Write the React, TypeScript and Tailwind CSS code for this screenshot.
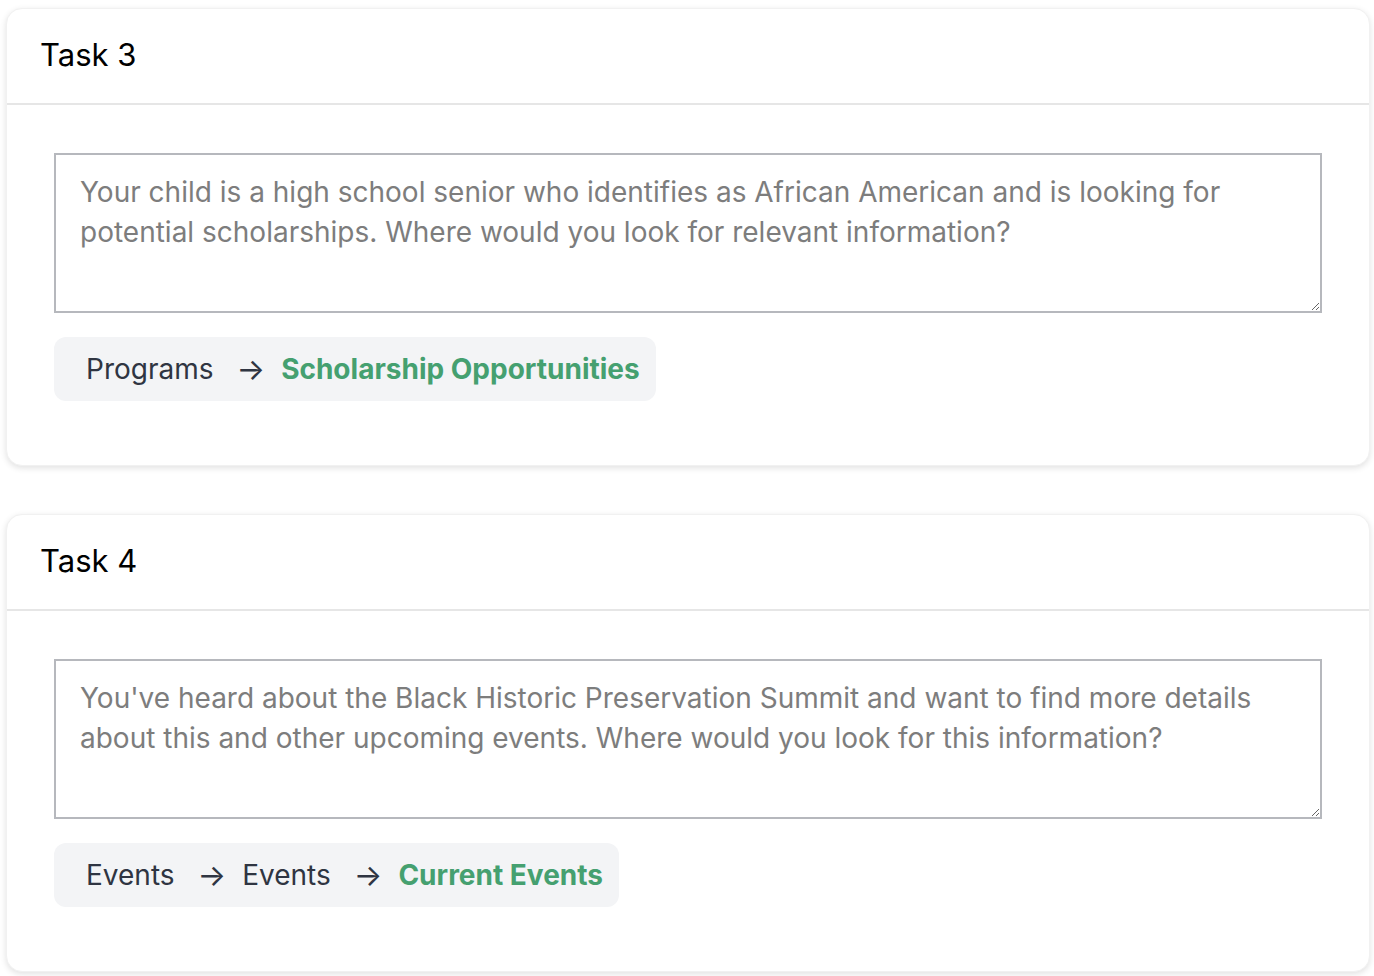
import React from "react";

type Task = {
  title: string;
  prompt: string;
  path: string[];
};

const TASKS: Task[] = [
  {
    title: "Task 3",
    prompt:
      "Your child is a high school senior who identifies as African American and is looking for potential scholarships. Where would you look for relevant information?",
    path: ["Programs", "Scholarship Opportunities"],
  },
  {
    title: "Task 4",
    prompt:
      "You've heard about the Black Historic Preservation Summit and want to find more details about this and other upcoming events. Where would you look for this information?",
    path: ["Events", "Events", "Current Events"],
  },
];

function TaskCard({ task }: { task: Task }) {
  const last = task.path.length - 1;
  return (
    <div className="rounded-2xl border border-[#f1f1f1] bg-white shadow-[0_2px_6px_rgba(0,0,0,0.12)]">
      <div className="flex h-[96px] items-center border-b-2 border-[#e6e6e6] px-[33px] pb-[3px]">
        <h2 className="text-[31px] leading-none text-black">{task.title}</h2>
      </div>
      <div className="px-[47px] pt-[48px] pb-[64px]">
        <textarea
          readOnly
          defaultValue={task.prompt}
          className="block h-[160px] w-full resize-y border-2 border-[#b6b8bd] bg-white px-[24px] pt-[17px] pb-[8px] text-[28px] leading-[40px] text-[#7d7d7d] outline-none"
        />
        <div className="mt-[24px] inline-flex h-[64px] items-center rounded-xl bg-[#f3f4f6] pl-[32px] pr-[16px] text-[28px] text-[#2f3542]">
          {task.path.map((p, i) => (
            <React.Fragment key={i}>
              {i > 0 && <span className="ml-[23px] mr-[16px] text-[30px] leading-none">→</span>}
              <span className={i === last ? "font-bold text-[#45a070]" : ""}>{p}</span>
            </React.Fragment>
          ))}
        </div>
      </div>
    </div>
  );
}

export default function App() {
  return (
    <div
      className="min-h-screen bg-white pt-[8px] pl-[6px] pr-[4px]"
      style={{ fontFamily: "Inter, 'Noto Sans', sans-serif" }}
    >
      <div className="flex flex-col gap-[48px]">
        {TASKS.map((t) => (
          <TaskCard key={t.title} task={t} />
        ))}
      </div>
    </div>
  );
}
